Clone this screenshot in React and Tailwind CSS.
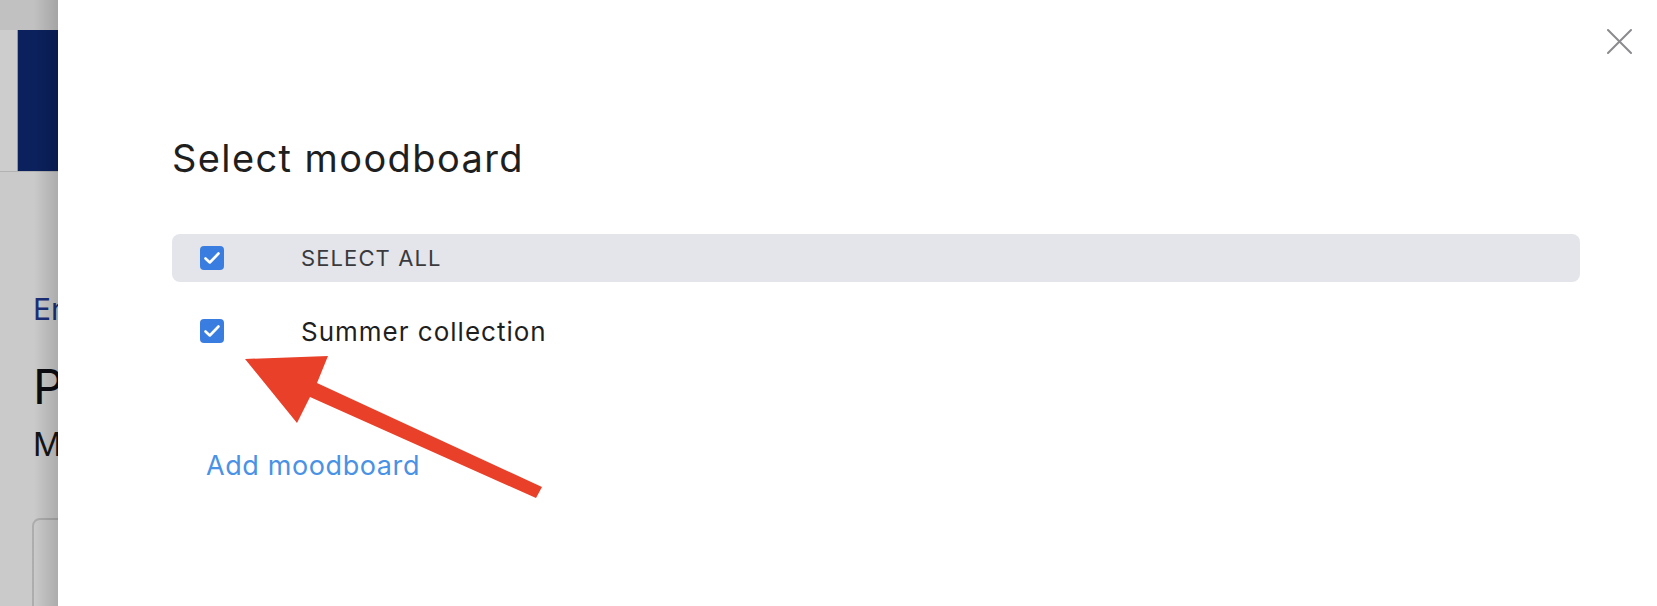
import React from "react";

function Check() {
  return (
    <span className="flex h-[24px] w-[24px] shrink-0 items-center justify-center rounded-[4px] bg-[#3a7de0]">
      <svg width="24" height="24" viewBox="0 0 24 24" fill="none">
        <path d="M5.5 12.5 L9.8 16.5 L18.5 7.5" stroke="white" strokeWidth="2.6" strokeLinecap="round" strokeLinejoin="round" />
      </svg>
    </span>
  );
}

export default function App() {
  return (
    <div className="relative flex h-[606px] w-[1657px] overflow-hidden bg-white font-['Inter',sans-serif]">
      {/* dimmed page behind the drawer */}
      <div className="relative flex w-[58px] shrink-0 flex-col overflow-hidden bg-[#cacaca]">
        <div className="h-[30px] shrink-0 bg-[#c1c1c1]" />
        <div className="flex h-[142px] shrink-0 border-b border-[#b2b2b2]">
          <div className="w-[18px] shrink-0 border-r border-[#979797] bg-[#cdcdcd]" />
          <div className="flex-1 bg-[#0b215d]" />
        </div>
        <div className="flex flex-col whitespace-nowrap pl-[32px]">
          <div className="ml-[1px] mt-[119px] text-[30px] leading-[36px] text-[#1b2f78]">English</div>
          <div className="ml-[1px] mt-[32px] text-[48px] leading-[56px] text-[#0a0c12]">Products</div>
          <div className="ml-[1px] mt-[10px] text-[32px] leading-[40px] text-[#141414]">Moodboards</div>
          <div className="mt-[53px] h-[200px] w-[300px] rounded-lg border-2 border-[#adadad]" />
        </div>
        <div className="pointer-events-none absolute inset-y-0 right-0 w-[24px] bg-gradient-to-l from-black/15 to-transparent" />
      </div>

      {/* drawer */}
      <div className="flex flex-1 flex-col bg-white">
        <div className="flex justify-end pr-[25px] pt-[29px]">
          <svg width="25" height="25" viewBox="0 0 25 25" fill="none">
            <path d="M1 1 L24 24 M24 1 L1 24" stroke="#8b8b8f" strokeWidth="2" strokeLinecap="round" />
          </svg>
        </div>
        <div className="pl-[114px] pr-[77px]">
          <h1 className="mt-[82px] text-[38px] font-normal leading-[44px] tracking-[1.4px] text-[#1f1f1f]">Select moodboard</h1>
          <div className="mt-[54px] flex h-[48px] items-center rounded-lg bg-[#e4e5ea] pl-[28px]">
            <Check />
            <span className="ml-[77px] text-[22px] uppercase tracking-[1.1px] text-[#3a3a3e]">Select all</span>
          </div>
          <div className="mt-[25px] flex h-[48px] items-center pl-[28px]">
            <Check />
            <span className="ml-[77px] text-[26px] tracking-[1px] text-[#1f1f1f]">Summer collection</span>
          </div>
          <div className="mt-[95px] pl-[34px] text-[27px] leading-[32px] tracking-[0.6px] text-[#4a92e6]">Add moodboard</div>
        </div>
      </div>

      {/* annotation arrow */}
      <svg className="pointer-events-none absolute left-0 top-0" width="1657" height="606" viewBox="0 0 1657 606">
        <polygon points="245,359 328,356 317,383 542,487 536,498 310,397 297,423" fill="#e9402a" />
      </svg>
    </div>
  );
}
